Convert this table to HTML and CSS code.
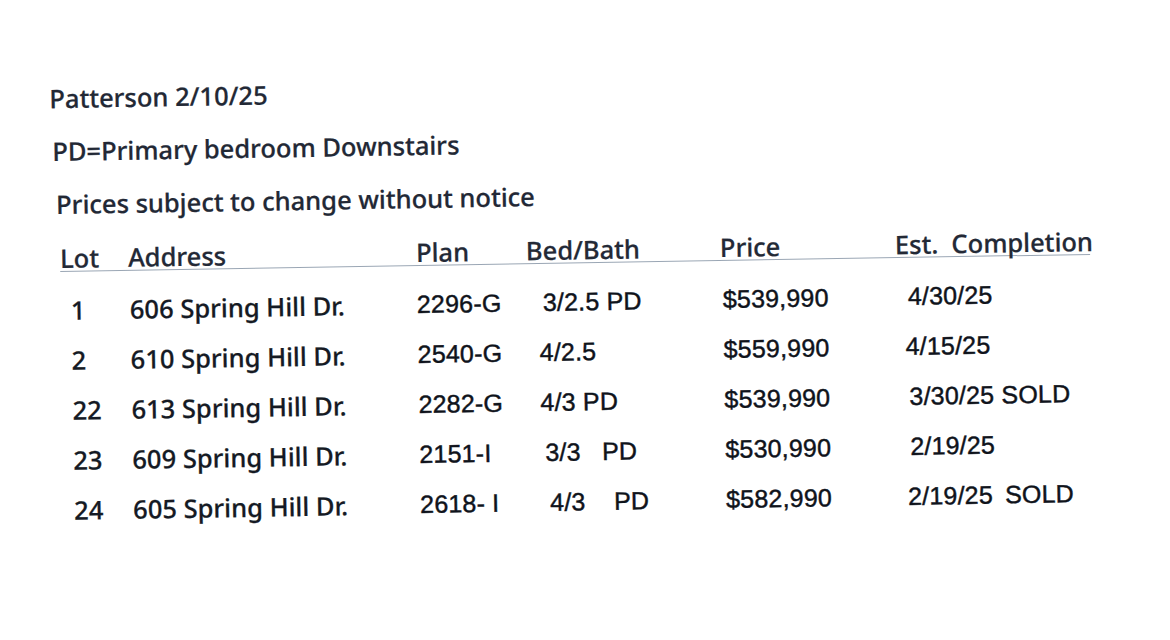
FILE: index.html
```html
<!DOCTYPE html>
<html lang="en">
<head>
<meta charset="utf-8">
<title>Patterson 2/10/25</title>
<link rel="stylesheet" href="styles.css">
</head>
<body>
<main class="page">
  <div class="note note-a">Patterson 2/10/25</div>
  <div class="note note-b">PD=Primary bedroom Downstairs</div>
  <div class="note note-c">Prices subject to change without notice</div>

  <div class="table">
    <div class="row head">
      <div class="c lot">Lot</div>
      <div class="c addr">Address</div>
      <div class="c plan">Plan</div>
      <div class="c bed">Bed/Bath</div>
      <div class="c price">Price</div>
      <div class="c est">Est.&nbsp; Completion</div>
    </div>
    <div class="row">
      <div class="c lot">1</div>
      <div class="c addr">606 Spring Hill Dr.</div>
      <div class="c plan">2296-G</div>
      <div class="c bed">3/2.5 PD</div>
      <div class="c price">$539,990</div>
      <div class="c est">4/30/25</div>
    </div>
    <div class="row">
      <div class="c lot">2</div>
      <div class="c addr">610 Spring Hill Dr.</div>
      <div class="c plan">2540-G</div>
      <div class="c bed bed-tight">4/2.5</div>
      <div class="c price">$559,990</div>
      <div class="c est est-tight">4/15/25</div>
    </div>
    <div class="row">
      <div class="c lot">22</div>
      <div class="c addr">613 Spring Hill Dr.</div>
      <div class="c plan">2282-G</div>
      <div class="c bed bed-tight">4/3 PD</div>
      <div class="c price">$539,990</div>
      <div class="c est">3/30/25 SOLD</div>
    </div>
    <div class="row">
      <div class="c lot">23</div>
      <div class="c addr">609 Spring Hill Dr.</div>
      <div class="c plan">2151-I</div>
      <div class="c bed">3/3   PD</div>
      <div class="c price">$530,990</div>
      <div class="c est">2/19/25</div>
    </div>
    <div class="row">
      <div class="c lot">24</div>
      <div class="c addr">605 Spring Hill Dr.</div>
      <div class="c plan">2618- I</div>
      <div class="c bed bed-wide">4/3    PD</div>
      <div class="c price">$582,990</div>
      <div class="c est est-tight">2/19/25 <span class="gap">SOLD</span></div>
    </div>
  </div>
</main>
</body>
</html>
```

FILE: styles.css
```css
html, body {
  margin: 0;
  padding: 0;
  background: #ffffff;
}

body {
  width: 1170px;
  height: 640px;
  overflow: hidden;
  font-family: "Noto Sans", "Open Sans", sans-serif;
  color: #1c2230;
}

.page {
  padding: 72px 0 0 52px;
  transform: rotate(-0.95deg);
  transform-origin: 60px 257px;
}

.note {
  height: 53px;
  line-height: 53px;
  font-size: 25.5px;
  font-weight: 500;
  color: #222835;
  white-space: nowrap;
  -webkit-text-stroke: 0.25px currentColor;
}

.note-b { padding-left: 2px; }
.note-c { padding-left: 5px; }

.table {
  margin-left: 8px;
}

.row {
  display: grid;
  grid-template-columns: 68px 288px 110px 194px 175px 1fr;
  height: 50px;
  align-items: center;
  white-space: pre;
}

.row.head {
  height: 54px;
  background: linear-gradient(#9aa6b4, #9aa6b4) no-repeat;
  background-size: 1030px 1px;
  background-position: 0 40px;
}

.c {
  font-size: 25.5px;
  font-weight: 500;
  color: #151a24;
  -webkit-text-stroke: 0.25px currentColor;
}

.row.head .c {
  color: #232936;
}

.plan, .bed, .price, .est {
  font-family: "Liberation Sans", Arial, sans-serif;
  font-size: 25px;
  font-weight: 400;
  letter-spacing: 0.2px;
  color: #0f131b;
  -webkit-text-stroke: 0.45px currentColor;
}

.row.head .plan,
.row.head .bed,
.row.head .price,
.row.head .est {
  font-family: "Noto Sans", "Open Sans", sans-serif;
  font-size: 25.5px;
  font-weight: 500;
  letter-spacing: 0;
  -webkit-text-stroke: 0.25px currentColor;
}

.gap { margin-left: 5px; }

.row:not(.head) .lot { padding-left: 10px; }
.row:not(.head) .addr { padding-left: 1px; }
.row:not(.head) .bed { padding-left: 16px; }
.row:not(.head) .bed-tight { padding-left: 12px; }
.row:not(.head) .bed-wide { padding-left: 20px; }
.row:not(.head) .price { padding-left: 2px; }
.row:not(.head) .est { padding-left: 12px; }
.row:not(.head) .est-tight { padding-left: 9px; }
```
